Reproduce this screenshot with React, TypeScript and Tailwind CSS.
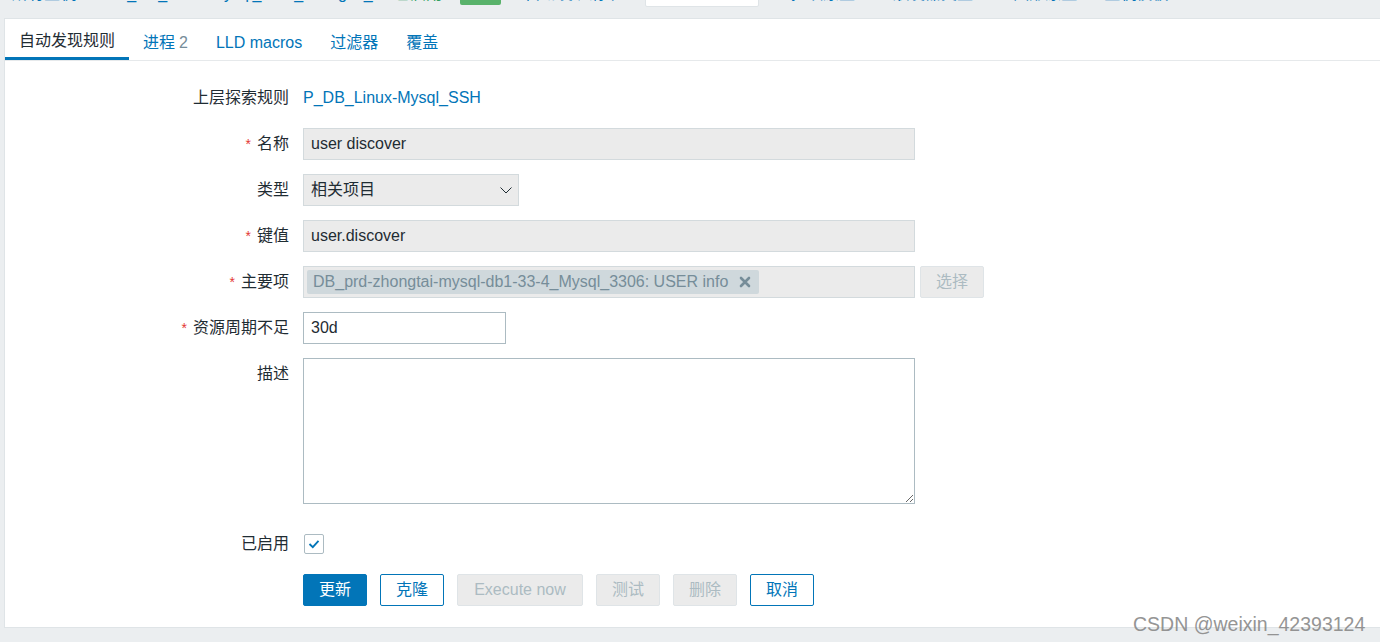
import React from 'react';

const crumbs = [
  { label: '所有主机', x: 'ml-[12px]' },
];

function Field({ label, required, children, top }: { label: string; required?: boolean; children: React.ReactNode; top?: boolean }) {
  return (
    <div className={top ? 'flex items-start' : 'flex items-center min-h-[32px]'}>
      <div className="w-[298px] h-[32px] flex items-center justify-end pr-[14px] text-[#1f2c33] shrink-0">
        {required && <span className="text-[#e33734] mr-[6px] text-[14px]">*</span>}
        <span>{label}</span>
      </div>
      {children}
    </div>
  );
}

export default function App() {
  return (
    <div className="w-[1380px] h-[642px] bg-[#ebeef0] overflow-hidden relative font-['Liberation_Sans','Noto_Sans_CJK_SC',sans-serif] text-[16px] text-[#1f2c33]">
      {/* breadcrumb strip (mostly scrolled out of view) */}
      <div className="h-[18px] overflow-hidden">
        <div className="-mt-[22px] h-[32px] flex items-center whitespace-nowrap text-[#0275b8]">
          {crumbs.map((c) => (
            <span key={c.label} className={c.x}>{c.label}</span>
          ))}
          <span className="ml-[8px] text-[#768d99]">/</span>
          <span className="ml-[28px]">P_DB_Linux-Mysql_SSH_zhongtai_</span>
          <span className="ml-[22px] text-[#2f9f5f]">已启用</span>
          <span className="ml-[17px] h-[22px] w-[41px] rounded-[2px] bg-[#59b26b] text-white text-[14px] flex items-center justify-center">ZBX</span>
          <span className="ml-[24px]">自动发现清单</span>
          <span className="ml-[12px] text-[#768d99]">/</span>
          <span className="ml-[8px] w-[114px] h-[26px] bg-white border border-[#dfe4e7] rounded-[2px]"></span>
          <span className="ml-[16px]">监控项原型</span>
          <span className="ml-[38px]">触发器类型</span>
          <span className="ml-[40px]">图形原型</span>
          <span className="ml-[27px]">主机模板</span>
        </div>
      </div>

      {/* main panel */}
      <div className="ml-[4px] h-[610px] bg-white border-l border-t border-b border-[#dfe4e7]">
        {/* tabs */}
        <div className="flex border-b border-[#e6e9eb] h-[42px]">
          <div className="h-[41px] pt-[6px] px-[14px] flex items-center border-b-[3px] border-[#0275b8] text-[#1f2c33]">自动发现规则</div>
          <div className="h-[41px] pt-[6px] px-[14px] flex items-center text-[#0275b8]">进程<span className="ml-[4px] text-[#768d99]">2</span></div>
          <div className="h-[41px] pt-[6px] px-[14px] flex items-center text-[#0275b8]">LLD macros</div>
          <div className="h-[41px] pt-[6px] px-[14px] flex items-center text-[#0275b8]">过滤器</div>
          <div className="h-[41px] pt-[6px] px-[14px] flex items-center text-[#0275b8]">覆盖</div>
        </div>

        {/* form */}
        <div className="pt-[21px] flex flex-col gap-[14px]">
          <Field label="上层探索规则">
            <span className="text-[#0275b8]">P_DB_Linux-Mysql_SSH</span>
          </Field>
          <Field label="名称" required>
            <div className="w-[612px] h-[32px] bg-[#ebebeb] border border-[#d3dadd] px-[7px] flex items-center">user discover</div>
          </Field>
          <Field label="类型">
            <div className="w-[216px] h-[32px] bg-[#ebebeb] border border-[#d3dadd] pl-[7px] pr-[4px] flex items-center justify-between">
              <span>相关项目</span>
              <svg width="14" height="14" viewBox="0 0 14 14" className="mr-[1px]">
                <polyline points="1.5,4.5 7,10 12.5,4.5" fill="none" stroke="#1f2c33" strokeWidth="1" />
              </svg>
            </div>
          </Field>
          <Field label="键值" required>
            <div className="w-[612px] h-[32px] bg-[#ebebeb] border border-[#d3dadd] px-[7px] flex items-center">user.discover</div>
          </Field>
          <Field label="主要项" required>
            <div className="w-[612px] h-[32px] bg-[#ebebeb] border border-[#d3dadd] px-[3px] flex items-center">
              <div className="h-[24px] bg-[#cfd8dc] rounded-[2px] pl-[6px] pr-[8px] flex items-center text-[#768d99] whitespace-nowrap">
                <span>DB_prd-zhongtai-mysql-db1-33-4_Mysql_3306: USER info</span>
                <svg width="12" height="12" viewBox="0 0 12 12" className="ml-[11px]">
                  <path d="M2 2 L10 10 M10 2 L2 10" stroke="#768d99" strokeWidth="2.6" strokeLinecap="round" />
                </svg>
              </div>
            </div>
            <div className="ml-[5px] w-[64px] h-[32px] bg-[#ebebeb] border border-[#dfe4e7] rounded-[2px] text-[#acbbc2] flex items-center justify-center">选择</div>
          </Field>
          <Field label="资源周期不足" required>
            <div className="w-[203px] h-[32px] bg-white border border-[#acbbc2] px-[7px] flex items-center">30d</div>
          </Field>
          <Field label="描述" top>
            <textarea className="w-[612px] h-[146px] bg-white border border-[#acbbc2] outline-none resize" defaultValue="" />
          </Field>
          <div className="mt-[10px]">
            <Field label="已启用">
              <div className="ml-[1px] w-[20px] h-[20px] border border-[#acbbc2] rounded-[2px] flex items-center justify-center">
                <svg width="14" height="14" viewBox="0 0 14 14">
                  <polyline points="2.5,7 5.8,10.2 11.5,3.8" fill="none" stroke="#0275b8" strokeWidth="1.8" />
                </svg>
              </div>
            </Field>
          </div>
          <div className="flex pl-[298px] gap-[13px]">
            <button className="w-[64px] h-[32px] rounded-[2px] bg-[#0275b8] border border-[#0275b8] text-white">更新</button>
            <button className="w-[64px] h-[32px] rounded-[2px] bg-white border border-[#0275b8] text-[#0275b8]">克隆</button>
            <button className="w-[126px] h-[32px] rounded-[2px] bg-[#ebebeb] border border-[#dfe4e7] text-[#acbbc2]">Execute now</button>
            <button className="w-[64px] h-[32px] rounded-[2px] bg-[#ebebeb] border border-[#dfe4e7] text-[#acbbc2]">测试</button>
            <button className="w-[64px] h-[32px] rounded-[2px] bg-[#ebebeb] border border-[#dfe4e7] text-[#acbbc2]">删除</button>
            <button className="w-[64px] h-[32px] rounded-[2px] bg-white border border-[#0275b8] text-[#0275b8]">取消</button>
          </div>
        </div>
      </div>

      {/* watermark */}
      <div className="absolute left-[1133px] top-[610px] text-[19.5px] text-[#8a8a8a] opacity-90 whitespace-nowrap">CSDN @weixin_42393124</div>
    </div>
  );
}
